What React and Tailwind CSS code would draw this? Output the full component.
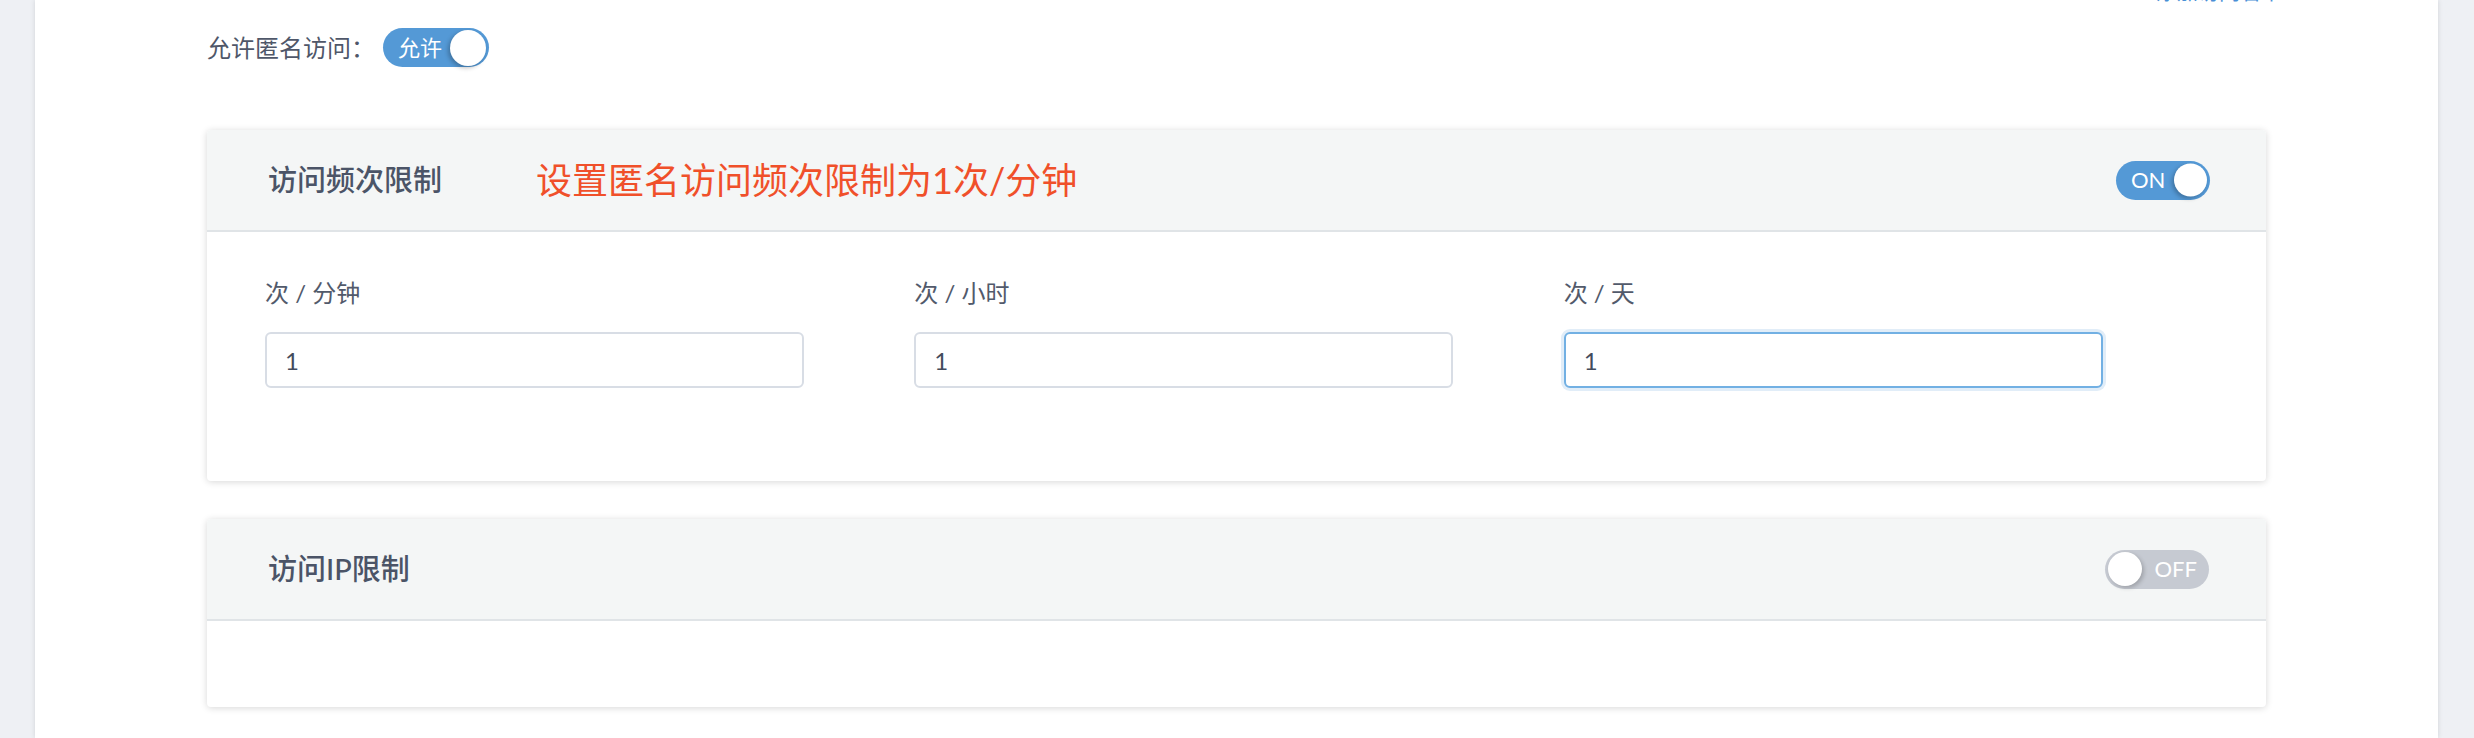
import { useState } from 'react';

function Toggle({ on, label, width, knob }) {
    return (
        <div
            className={
                'relative flex h-[39px] shrink-0 items-center rounded-full ' +
                (on ? 'bg-[#5499d6] justify-start' : 'bg-[#c6cad2] justify-end')
            }
            style={{ width }}
        >
            <span className={'text-[22px] leading-none text-white ' + (on ? 'pl-[15px]' : 'pr-[12px]')}>{label}</span>
            <span
                className={
                    'absolute top-1/2 -translate-y-1/2 rounded-full bg-white ' +
                    (on ? 'right-[3px] shadow-[-2px_2px_4px_rgba(0,0,0,0.25)]' : 'left-[3px] shadow-[2px_2px_4px_rgba(0,0,0,0.2)]')
                }
                style={{ width: knob, height: knob }}
            />
        </div>
    );
}

function Field({ label, value, focused }) {
    return (
        <div>
            <div className="text-[24px] leading-[30px] text-[#525a6b] mb-[24px]">{label}</div>
            <input
                type="text"
                defaultValue={value}
                className={
                    'w-[539px] h-[56px] rounded-[6px] bg-white pl-[18px] text-[24px] font-normal text-[#434b5c] outline-none ' +
                    (focused
                        ? 'border-2 border-[#72b0e3] shadow-[0_0_0_3px_#e1edf8]'
                        : 'border-2 border-[#d8dde5]')
                }
            />
        </div>
    );
}

export default function App() {
    const [values] = useState({ minute: '1', hour: '1', day: '1' });

    return (
        <div className="h-[738px] overflow-hidden bg-[#eef0f4] pl-[35px] pr-[36px] font-['Lato','Noto_Sans_CJK_SC',sans-serif]">
            <div className="h-full overflow-hidden bg-white shadow-[0_0_5px_rgba(0,0,0,0.12)]">
                <div className="flex h-[28px] -mt-[23px] justify-end pr-[156px] text-[21px] leading-[28px] text-[#4a8fd6]">
                    <span className="mr-[8px]">+</span>
                    <span>添加访问名单</span>
                </div>

                <div className="px-[172px]">
                    <div className="mt-[23px] flex items-center">
                        <span className="text-[24px] leading-[39px] text-[#4f5769]">允许匿名访问：</span>
                        <div className="ml-[8px]">
                            <Toggle on label="允许" width={106} knob={36} />
                        </div>
                    </div>

                    <div className="mt-[63px] rounded-[4px] bg-white shadow-[0_1px_7px_rgba(0,0,0,0.16)]">
                        <div className="flex h-[102px] items-center rounded-t-[4px] border-b-2 border-[#e0e4e7] bg-[#f4f6f6] pl-[61px] pr-[56px]">
                            <span className="text-[29px] font-medium text-[#4b5467]">访问频次限制</span>
                            <span className="ml-[94px] text-[36px] text-[#f0502a]">设置匿名访问频次限制为1次/分钟</span>
                            <div className="ml-auto">
                                <Toggle on label="ON" width={94} knob={33} />
                            </div>
                        </div>
                        <div className="grid grid-cols-3 gap-x-[109px] pl-[58px] pr-[162px] pt-[46px] pb-[93px]">
                            <Field label="次 / 分钟" value={values.minute} />
                            <Field label="次 / 小时" value={values.hour} />
                            <Field label="次 / 天" value={values.day} focused />
                        </div>
                    </div>

                    <div className="mt-[38px] rounded-[4px] bg-white shadow-[0_1px_7px_rgba(0,0,0,0.16)]">
                        <div className="flex h-[102px] items-center rounded-t-[4px] border-b-2 border-[#e0e4e7] bg-[#f4f6f6] pl-[61px] pr-[57px]">
                            <span className="text-[29px] font-medium text-[#4b5467]">访问IP限制</span>
                            <div className="ml-auto">
                                <Toggle label="OFF" width={104} knob={34} />
                            </div>
                        </div>
                        <div className="h-[86px]" />
                    </div>
                </div>
            </div>
        </div>
    );
}
